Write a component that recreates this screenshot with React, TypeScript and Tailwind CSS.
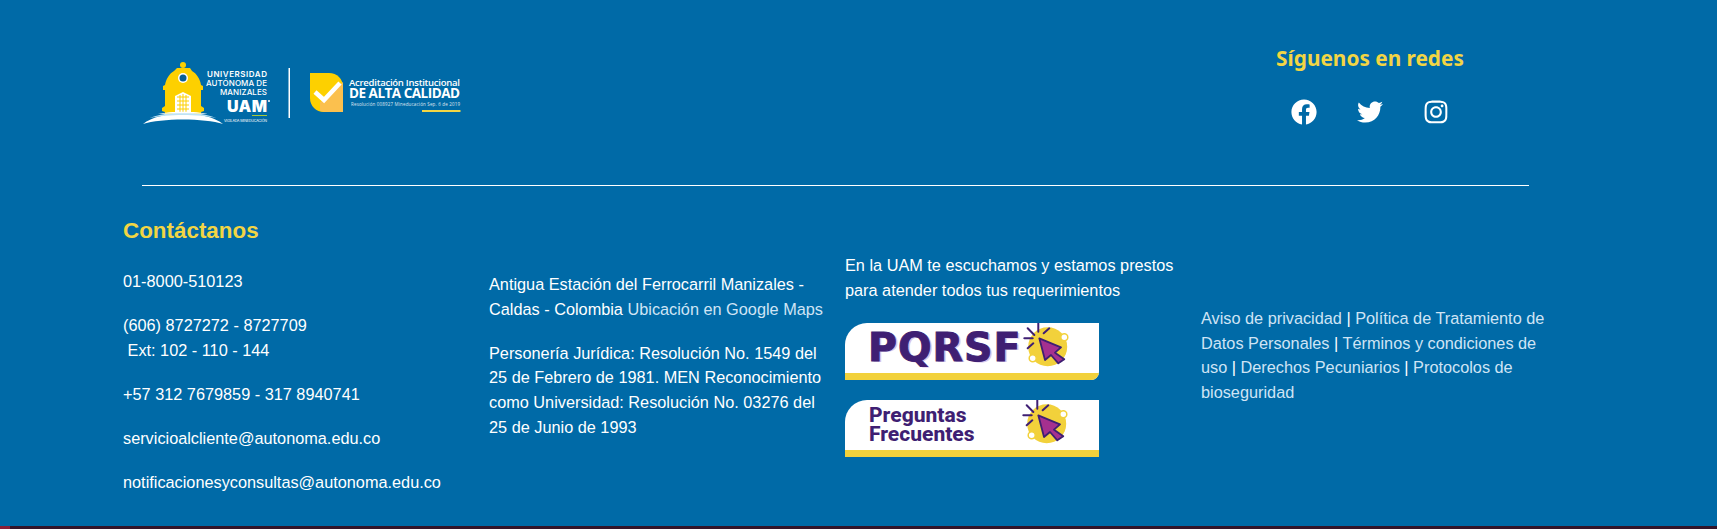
import { FaFacebook, FaInstagram, FaTwitter } from "react-icons/fa";

const Logos = () => {
  return (
    <svg width="322" height="66" viewBox="142 60 322 66" className="block">
      {/* edificio */}
      <circle cx="183" cy="65" r="3" fill="#fdd000" />
      <path
        d="M177 68h13l2 3c5 3 8 8 9 14l2 1v4h-2v16l3 2v3l-3 1v2H165v-2l-3-1v-3l3-2V90h-2v-4l2-1c1-6 4-11 9-14z"
        fill="#fdd000"
      />
      <circle cx="183" cy="78" r="5" fill="#fff" />
      <circle cx="183" cy="78" r="3.5" fill="#0a5f96" />
      <path d="M175 112V96l8-4 8 4v16z" fill="#fff" />
      <path d="M177 97h12M177 101h12M177 105h12M177 109h12M180 95v17M183 94v18M186 95v17" stroke="#fdd000" strokeWidth="1" />
      {/* base */}
      <path d="M143 124c17-14 63-14 80 0-18-6-62-6-80 0z" fill="#fff" />
      <path d="M150 118c16-7 50-7 66 0-18-4-48-4-66 0z" fill="#bfe3f5" />
      <path d="M158 114c12-3 38-3 50 0-14-1-36-1-50 0z" fill="#fff" />
      {/* nombre */}
      <g fill="#fff" fontFamily="Inter, sans-serif" textAnchor="end">
        <text x="267" y="77" fontSize="8" fontWeight="600" textLength="60">UNIVERSIDAD</text>
        <text x="267" y="86" fontSize="8" fontWeight="500" textLength="61">AUTÓNOMA DE</text>
        <text x="267" y="95" fontSize="8" fontWeight="500" textLength="47">MANIZALES</text>
        <text x="267" y="112" fontSize="16" fontWeight="900" textLength="40">UAM</text>
        <text x="267" y="122" fontSize="3.6" textLength="43">VIGILADA MINEDUCACIÓN</text>
      </g>
      <circle cx="269" cy="101" r="1" fill="#fff" />
      <rect x="252" y="115" width="15" height="1" fill="#a8c93a" />
      <rect x="288.5" y="68" width="1.5" height="50" fill="#fff" />
      {/* acreditacion */}
      <path d="M310 73h19c8 0 14 6 14 14v25h-19c-8 0-14-6-14-14z" fill="#fdd000" />
      <path d="M343 82v30h-19l-4-1v-9l4-2z" fill="#fbc04e" />
      <path d="M315 92l9 8 16-17" fill="none" stroke="#fff" strokeWidth="4.5" />
      <g fill="#fff" fontFamily="'Open Sans', sans-serif">
        <text x="349" y="85.5" fontSize="9.5" fontWeight="600" textLength="111">Acreditación Institucional</text>
        <text x="349" y="98" fontSize="13.5" fontWeight="700" textLength="111">DE ALTA CALIDAD</text>
        <text x="351" y="105.5" fontSize="4.5" textLength="109" opacity="0.85">Resolución 008927 Mineducación Sep. 6 de 2019</text>
      </g>
      <rect x="422" y="110" width="38.5" height="2" fill="#f2d544" />
    </svg>
  );
};

const ClickIcon = () => {
  return (
    <svg width="50" height="50" viewBox="0 2 50 50" className="block shrink-0">
      <circle cx="26.7" cy="25.7" r="19.5" fill="#f2d13b" />
      <circle cx="43.3" cy="16.3" r="3.5" fill="#fff" stroke="#f2d13b" strokeWidth="1.5" />
      <circle cx="11.7" cy="37.3" r="3.5" fill="#fff" stroke="#f2d13b" strokeWidth="1.5" />
      <path
        d="M6.7 7.3l6.6 6.7M17.3 2.3v8.4M28.3 7.3l-5.6 5M3.3 17.3h8.4M6.7 27.3l5.6-5"
        stroke="#3f1f73"
        strokeWidth="2"
        strokeLinecap="round"
      />
      <path
        d="M18.3 17.3L40 26.3l-6 5.4 9.3 6.6-6 4L30 34l-6 5z"
        fill="#a5308f"
        stroke="#3f1f73"
        strokeWidth="1.8"
        strokeLinejoin="round"
      />
    </svg>
  );
};

const Aside = () => <span className="text-white"> | </span>;

const App = () => {
  return (
    <div className="relative h-[529px] w-full overflow-hidden bg-[#006aa7] font-['Liberation_Sans',Arial,sans-serif] text-[16.3px] leading-[24.6px] text-white">
      <div className="flex items-start justify-between pl-[142px] pr-[237px] pt-[44px]">
        <div className="mt-[16px]">
          <Logos />
        </div>
        <div className="flex w-[220px] flex-col items-center">
          <h2 className="font-['Noto_Sans',sans-serif] text-[20.8px] font-bold leading-[28px] text-[#f2d544]">
            Síguenos en redes
          </h2>
          <div className="mt-[27px] flex gap-[40px] text-[26px]">
            <FaFacebook />
            <FaTwitter />
            <FaInstagram />
          </div>
        </div>
      </div>

      <div className="ml-[142px] mt-[59px] h-px w-[1387px] bg-white" />

      <div className="grid grid-cols-[366px_356px_356px_352px] pl-[123px] pt-[33px]">
        <div>
          <h3 className="mb-[26px] text-[22.4px] font-bold leading-[24px] text-[#f2d544]">Contáctanos</h3>
          <p className="mb-[19.6px]">01-8000-510123</p>
          <p className="mb-[19.6px]">
            (606) 8727272 - 8727709
            <br />
            &nbsp;Ext: 102 - 110 - 144
          </p>
          <p className="mb-[19.6px]">+57 312 7679859 - 317 8940741</p>
          <p className="mb-[19.6px]">servicioalcliente@autonoma.edu.co</p>
          <p>notificacionesyconsultas@autonoma.edu.co</p>
        </div>

        <div className="pr-[14px] pt-[53px]">
          <p className="mb-[19.6px]">
            Antigua Estación del Ferrocarril Manizales - Caldas - Colombia{" "}
            <a className="text-[#cfe4f5]">Ubicación en Google Maps</a>
          </p>
          <p>
            Personería Jurídica: Resolución No. 1549 del 25 de Febrero de 1981. MEN Reconocimiento como Universidad:
            Resolución No. 03276 del 25 de Junio de 1993
          </p>
        </div>

        <div className="pr-[8px] pt-[34px]">
          <p>En la UAM te escuchamos y estamos prestos para atender todos tus requerimientos</p>
          <div className="mt-[21px] flex h-[57px] w-[254px] flex-col overflow-hidden rounded-br-[8px] rounded-tl-[22px] bg-white">
            <div className="flex flex-1 items-center justify-between pl-[23px] pr-[29px]">
              <span className="font-['DejaVu_Sans',sans-serif] text-[39.5px] font-bold leading-none tracking-[1px] text-[#3f1f73] [-webkit-text-stroke:1px_#3f1f73] [text-shadow:2px_1px_0_#d9c4ea]">
                PQRSF
              </span>
              <ClickIcon />
            </div>
            <div className="h-[7px] bg-[#f2d13b]" />
          </div>
          <div className="mt-[20px] flex h-[57px] w-[254px] flex-col overflow-hidden rounded-tl-[22px] bg-white">
            <div className="flex flex-1 items-center justify-between pl-[24px] pr-[29px]">
              <span className="font-['Roboto',sans-serif] text-[21px] font-extrabold leading-[19px] text-[#3f1f73]">
                Preguntas
                <br />
                Frecuentes
              </span>
              <ClickIcon />
            </div>
            <div className="h-[8px] bg-[#f2d13b]" />
          </div>
        </div>

        <div className="pt-[87px] text-[#cfe4f5]">
          <p>
            Aviso de privacidad
            <Aside />
            Política de Tratamiento de Datos Personales
            <Aside />
            Términos y condiciones de uso
            <Aside />
            Derechos Pecuniarios
            <Aside />
            Protocolos de bioseguridad
          </p>
        </div>
      </div>

      <div className="absolute bottom-0 left-0 h-[3px] w-full bg-[#33152a]">
        <div className="h-full w-[10px] bg-[#8a1f38]" />
      </div>
    </div>
  );
};

export default App;
